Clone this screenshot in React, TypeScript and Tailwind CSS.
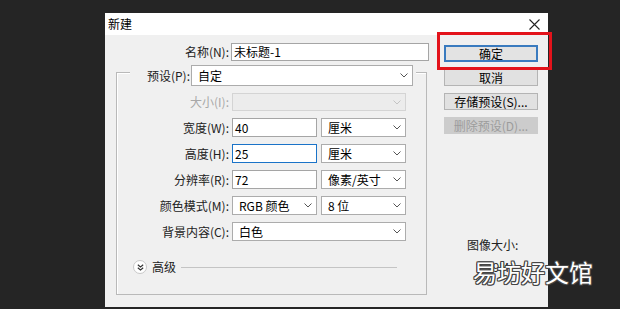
import React from "react";

const font = "font-['Noto_Sans_CJK_SC','Noto_Sans',sans-serif]";

function Chevron({ muted }: { muted?: boolean }) {
  return (
    <svg width="8" height="5" viewBox="0 0 8 5" className="shrink-0">
      <polyline
        points="0.5,0.5 4,4 7.5,0.5"
        fill="none"
        stroke={muted ? "#c4c4c4" : "#555"}
        strokeWidth="1"
      />
    </svg>
  );
}

function Field({ value, w, focus }: { value: string; w: string; focus?: boolean }) {
  return (
    <div
      className={`${w} h-[19px] flex items-center pl-[2px] bg-white border text-[12px] leading-none text-black ${
        focus ? "border-[#1a73c8]" : "border-[#a5a5a5]"
      }`}
    >
      {value}
    </div>
  );
}

function Select({
  value,
  w,
  h = "h-[19px]",
  disabled,
}: {
  value: string;
  w: string;
  h?: string;
  disabled?: boolean;
}) {
  return (
    <div
      className={`${w} ${h} flex items-center justify-between pl-[6px] pr-[4px] border text-[12px] leading-none ${
        disabled ? "bg-[#ececec] border-[#d4d4d4]" : "bg-white border-[#acacac] text-black"
      }`}
    >
      <span>{value}</span>
      <Chevron muted={disabled} />
    </div>
  );
}

function Row({ label, children, muted }: { label: string; children: React.ReactNode; muted?: boolean }) {
  return (
    <div className="flex items-center">
      <div className={`w-[112px] text-right text-[12px] leading-none ${muted ? "text-[#a8a8a8]" : "text-[#222]"}`}>
        {label}
      </div>
      <div className="ml-[3px] flex gap-[4px]">{children}</div>
    </div>
  );
}

function Btn({ label, primary, disabled }: { label: string; primary?: boolean; disabled?: boolean }) {
  return (
    <div
      className={`h-[17px] w-[94px] flex items-center justify-center text-[12px] leading-none ${
        primary
          ? "bg-[#e3e3e3] border-2 border-[#3a7bbf] text-black"
          : disabled
          ? "bg-[#cccccc] text-[#9c9c9c]"
          : "bg-[#e1e1e1] border border-[#b4b4b4] text-black"
      }`}
    >
      {label}
    </div>
  );
}

export default function App() {
  return (
    <div className={`relative w-[620px] h-[309px] overflow-hidden bg-[#252525] pt-[13px] pl-[105px] ${font}`}>
      <div className="w-[443px] h-[294px] bg-[#f0f0f0] flex flex-col">
        {/* title bar */}
        <div className="h-[22px] bg-white flex items-center justify-between pl-[3px] pr-[8px]">
          <span className="text-[12px] leading-none text-black">新建</span>
          <svg width="11" height="11" viewBox="0 0 11 11">
            <path d="M0.5 0.5 L10.5 10.5 M10.5 0.5 L0.5 10.5" stroke="#222" strokeWidth="1.1" />
          </svg>
        </div>

        <div className="flex">
          {/* left column */}
          <div className="w-[326px] pt-[8px] flex flex-col">
            <div className="flex items-center">
              <div className="w-[124px] text-right text-[12px] leading-none text-[#222]">名称(N):</div>
              <div className="ml-[2px] w-[198px] h-[18px] flex items-center pl-[2px] bg-white border border-[#a5a5a5] text-[12px] leading-none">
                未标题-1
              </div>
            </div>

            <div className="mt-[11px] ml-[11px] w-[311px] h-[223px] border border-[#b9b9b9] shadow-[inset_1px_1px_0_#fff] flex flex-col">
              <div className="-mt-[8px] ml-[13px] w-[286px] bg-[#f0f0f0] flex items-center">
                <div className="w-[60px] text-right text-[12px] leading-none text-[#222]">预设(P):</div>
                <div className="ml-[1px]">
                  <Select value="自定" w="w-[222px]" h="h-[21px]" />
                </div>
              </div>

              <div className="mt-[7px] flex flex-col gap-[7px]">
                <Row label="大小(I):" muted>
                  <Select value="" w="w-[174px]" h="h-[18px]" disabled />
                </Row>
                <Row label="宽度(W):">
                  <Field value="40" w="w-[85px]" />
                  <Select value="厘米" w="w-[85px]" />
                </Row>
                <Row label="高度(H):">
                  <Field value="25" w="w-[85px]" focus />
                  <Select value="厘米" w="w-[85px]" />
                </Row>
                <Row label="分辨率(R):">
                  <Field value="72" w="w-[85px]" />
                  <Select value="像素/英寸" w="w-[85px]" />
                </Row>
                <Row label="颜色模式(M):">
                  <Select value="RGB 颜色" w="w-[85px]" />
                  <Select value="8 位" w="w-[85px]" />
                </Row>
                <Row label="背景内容(C):">
                  <Select value="白色" w="w-[174px]" />
                </Row>
              </div>

              <div className="mt-[19px] ml-[16px] mr-[29px] flex items-center">
                <div className="w-[14px] h-[14px] rounded-full bg-white border border-[#c8c8c8] flex items-center justify-center">
                  <svg width="7" height="7" viewBox="0 0 7 7">
                    <path d="M0.8 0.8 L3.5 3 L6.2 0.8 M0.8 3.8 L3.5 6 L6.2 3.8" fill="none" stroke="#333" strokeWidth="1.1" />
                  </svg>
                </div>
                <span className="ml-[5px] text-[12px] leading-none text-[#222]">高级</span>
                <div className="ml-[5px] flex-1 h-px bg-[#c4c4c4]" />
              </div>
            </div>
          </div>

          {/* right column */}
          <div className="ml-[13px] pt-[10px] flex flex-col">
            <div className="flex flex-col gap-[7px]">
              <Btn label="确定" primary />
              <Btn label="取消" />
              <Btn label="存储预设(S)..." />
              <Btn label="删除预设(D)..." disabled />
            </div>
            <div className="mt-[105px] ml-[23px] text-[12px] leading-none text-[#222]">图像大小:</div>
            <div className="mt-[10px] ml-[32px] text-[12px] leading-none text-[#222]">2.29M</div>
          </div>
        </div>
      </div>

      {/* annotation highlight */}
      <div className="absolute left-[437px] top-[32px] w-[115px] h-[38px] border-[3px] border-[#e3131b]" />

      {/* watermark */}
      <div className="absolute left-[473px] top-[260px] text-[24px] leading-none tracking-[0px] text-white [text-shadow:1px_1px_0_#444,-1px_-1px_0_#444,1px_-1px_0_#444,-1px_1px_0_#444,0_1px_0_#444,0_-1px_0_#444,1px_0_0_#444,-1px_0_0_#444]">
        易坊好文馆
      </div>
    </div>
  );
}
